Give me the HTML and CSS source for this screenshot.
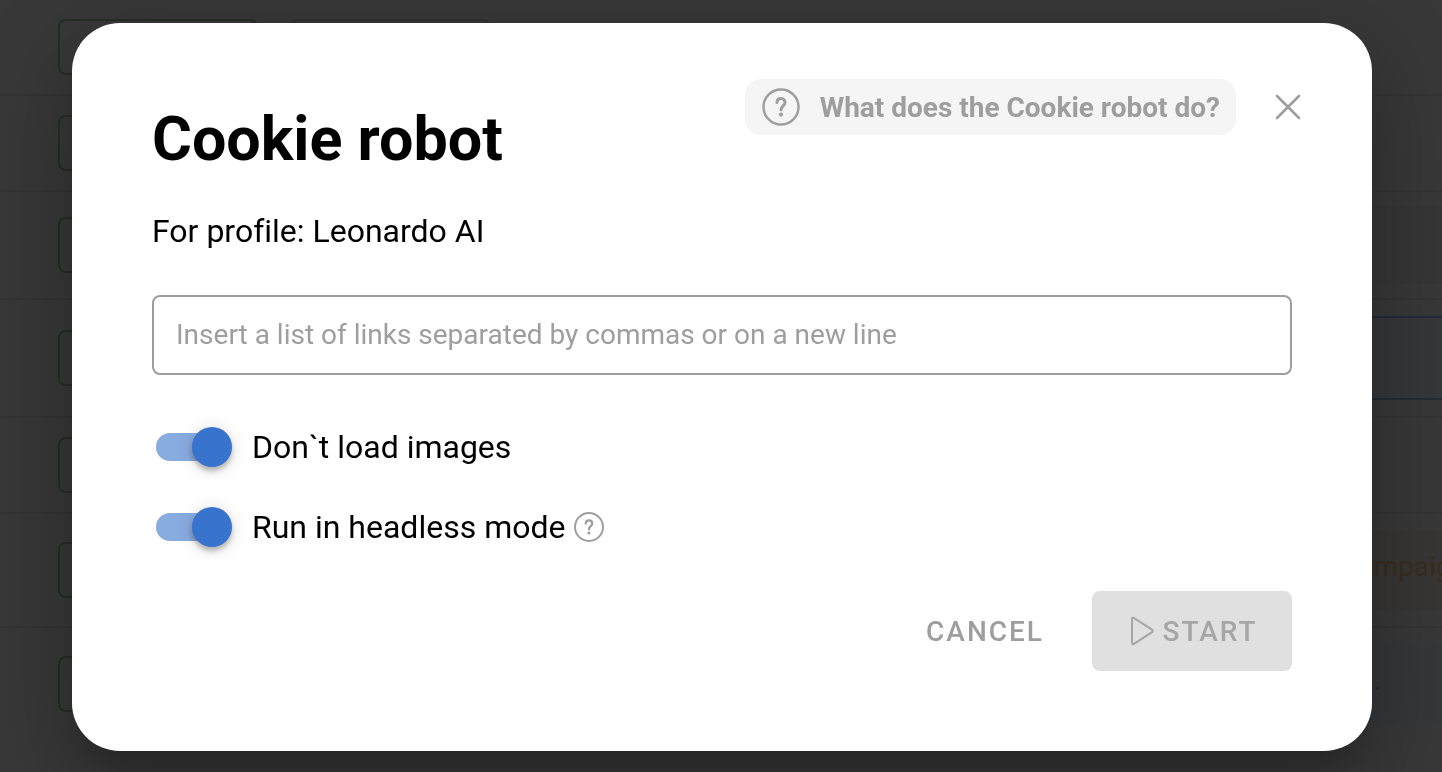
FILE: index.html
```html
<!DOCTYPE html>
<html lang="en">
<head>
  <meta charset="UTF-8">
  <meta name="viewport" content="width=device-width, initial-scale=1">
  <title>Cookie robot</title>
  <link rel="stylesheet" href="styles.css">
</head>
<body>

  <!-- PROFILE LIST -->
  <div class="profiles" aria-hidden="true">
    <div class="row"><span class="action"></span><span class="action grey"></span></div>
    <div class="row"><span class="action"></span></div>
    <div class="row note-row"><span class="action"></span><div class="note plain"></div></div>
    <div class="row edit-row"><span class="action"></span><div class="note editing"></div></div>
    <div class="row"><span class="action"></span></div>
    <div class="row tag-row"><span class="action"></span><div class="note orange">Campaign</div></div>
    <div class="row last"><span class="action"></span><div class="note blue">.</div></div>
  </div>

  <!-- DIALOG -->
  <div class="overlay">
    <form class="dialog" role="dialog" aria-labelledby="title">
      <div class="dialog-header">
        <h1 id="title">Cookie robot</h1>
        <button type="button" class="help-btn">
          <svg width="40" height="40" viewBox="0 0 40 40" fill="none" stroke="currentColor" stroke-linecap="round">
            <circle cx="20" cy="20" r="17.5" stroke-width="2.4"/>
            <path d="M16 15.6c0-2.6 1.7-4.2 4-4.2s4 1.7 4 4c0 3.3-4 3.6-4 7.4" stroke-width="3"/>
            <circle cx="20" cy="27.6" r="2.1" fill="currentColor" stroke="none"/>
          </svg>
          What does the Cookie robot do?
        </button>
        <button type="button" class="close-btn" aria-label="Close">
          <svg width="40" height="40" viewBox="0 0 40 40" stroke="currentColor" stroke-width="2.6" stroke-linecap="round">
            <path d="M9 9l22 22M31 9L9 31"/>
          </svg>
        </button>
      </div>

      <p class="profile">For profile: Leonardo AI</p>

      <textarea class="links" rows="1" aria-label="Links" placeholder="Insert a list of links separated by commas or on a new line"></textarea>

      <div class="option">
        <input type="checkbox" class="switch" id="no-images" checked>
        <label for="no-images">Don`t load images</label>
      </div>
      <div class="option">
        <input type="checkbox" class="switch" id="headless" checked>
        <label for="headless">Run in headless mode</label>
        <svg class="hint" width="32" height="32" viewBox="0 0 32 32" fill="none" stroke="currentColor" stroke-linecap="round">
          <circle cx="16" cy="16" r="14" stroke-width="2"/>
          <path d="M12.8 12.6c0-2.1 1.4-3.3 3.2-3.3s3.2 1.3 3.2 3.1c0 2.7-3.2 2.9-3.2 5.9" stroke-width="2.3"/>
          <circle cx="16" cy="22" r="1.6" fill="currentColor" stroke="none"/>
        </svg>
      </div>

      <div class="dialog-actions">
        <button type="button" class="btn">CANCEL</button>
        <button type="submit" class="btn btn-start" disabled>
          <svg width="24" height="30" viewBox="0 0 24 30" fill="none" stroke="currentColor" stroke-width="2" stroke-linejoin="round">
            <path d="M2 3.2c0-1.3 1-1.8 2-1.1l18 11.6c.9.6.9 1.9 0 2.5L4 27.9c-1 .7-2 .2-2-1.1z"/>
          </svg>
          START
        </button>
      </div>
    </form>
  </div>

</body>
</html>
```
FILE: styles.css
```css
* {
  box-sizing: border-box;
}

body {
  margin: 0;
  font-family: Roboto, sans-serif;
  background: #383838;
  color: #000;
  overflow: hidden;
}

/* Profile list */
.row {
  display: flex;
  align-items: center;
  gap: 32px;
  height: 96px;
  padding-left: 58px;
  border-bottom: 2px solid #343434;
}

.note-row { height: 108px; }
.edit-row { height: 118px; }
.tag-row { height: 114px; }

.last {
  height: 112px;
  border-bottom: 0;
}

.action {
  width: 200px;
  height: 56px;
  border: 2px solid #242e24;
  border-radius: 8px;
}

.grey { border-color: #313131; }

.note {
  width: 120px;
  height: 78px;
  margin-left: auto;
  padding-left: 18px;
  font-size: 28px;
  line-height: 72px;
  white-space: nowrap;
}

.plain { background: #363636; }

.editing {
  height: 84px;
  background: #35373a;
  border: solid #222b36;
  border-width: 2px 0;
}

.orange {
  background: #383634;
  color: #382c1e;
}

.blue {
  padding-left: 52px;
  background: #35373a;
  color: #222b36;
}

/* Dialog */
.overlay {
  position: fixed;
  inset: 0;
  display: flex;
  align-items: center;
  padding: 2px 70px 0 72px;
}

.dialog {
  width: 100%;
  padding: 56px 80px 80px;
  background: #fff;
  border-radius: 48px;
  box-shadow:
    0 22px 30px -14px rgba(0, 0, 0, 0.2),
    0 48px 76px 6px rgba(0, 0, 0, 0.14),
    0 18px 92px 16px rgba(0, 0, 0, 0.12);
}

.dialog-header {
  display: flex;
  align-items: flex-start;
  margin-right: -16px;
}

h1 {
  margin: 24px auto 0 0;
  font-size: 61px;
  line-height: 72px;
  font-weight: 700;
}

button {
  border: 0;
  background: none;
  font-family: inherit;
  color: #9e9e9e;
  cursor: pointer;
}

.help-btn {
  display: flex;
  align-items: center;
  gap: 19px;
  height: 56px;
  padding: 0 16px;
  background: #f5f5f5;
  border-radius: 16px;
  font-size: 28px;
  font-weight: 700;
}

.close-btn {
  height: 56px;
  margin-left: 32px;
  padding: 0;
}

.close-btn svg {
  display: block;
}

.profile {
  margin: 32px 0 40px;
  font-size: 32px;
  line-height: 48px;
  font-variant-ligatures: none;
}

.links {
  display: block;
  width: 100%;
  height: 80px;
  padding: 18px 22px;
  border: 2px solid #9e9e9e;
  border-radius: 8px;
  font-family: inherit;
  font-size: 28px;
  line-height: 40px;
  resize: none;
}

.links::placeholder {
  color: #9e9e9e;
}

.option {
  display: flex;
  align-items: center;
  height: 40px;
  margin-top: 40px;
  font-size: 32px;
}

.links + .option {
  margin-top: 52px;
}

.switch {
  appearance: none;
  display: flex;
  align-items: center;
  justify-content: flex-end;
  width: 72px;
  height: 28px;
  margin: 0 24px 0 4px;
  border-radius: 14px;
  background: #88abe0;
}

.switch::before {
  content: "";
  flex: none;
  width: 40px;
  height: 40px;
  margin-right: -4px;
  border-radius: 50%;
  background: #3873ce;
  box-shadow:
    0 4px 8px -2px rgba(0, 0, 0, 0.2),
    0 4px 4px rgba(0, 0, 0, 0.14),
    0 2px 20px rgba(0, 0, 0, 0.12);
}

.switch:not(:checked) {
  justify-content: flex-start;
  background: #9e9e9e;
}

.hint {
  margin-left: 8px;
  color: #9e9e9e;
}

.dialog-actions {
  display: flex;
  justify-content: flex-end;
  margin-top: 44px;
}

.btn {
  display: flex;
  align-items: center;
  justify-content: center;
  gap: 8px;
  height: 80px;
  padding: 0 48px;
  border-radius: 8px;
  font-size: 28px;
  font-weight: 500;
  letter-spacing: 2px;
}

.btn-start {
  width: 200px;
  padding: 0 0 0 4px;
  background: #e0e0e0;
  color: #a6a6a6;
}
```
